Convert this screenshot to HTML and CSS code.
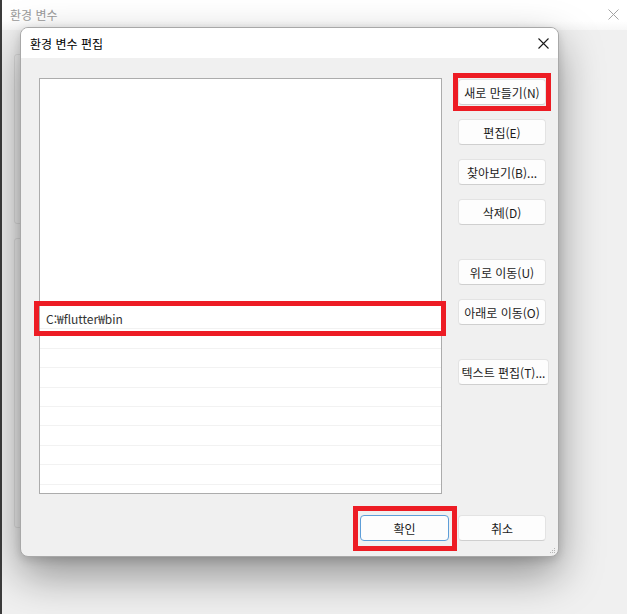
FILE: index.html
```html
<!DOCTYPE html>
<html lang="ko">
<head>
    <meta charset="UTF-8">
    <meta name="viewport" content="width=device-width, initial-scale=1.0">
    <title>환경 변수 편집</title>
    <link rel="stylesheet" href="styles.css">
</head>
<body>
    <div class="desktop">
        <!-- window behind the dialog -->
        <div class="bg-window">
            <div class="bg-titlebar">
                <span class="bg-title">환경 변수</span>
                <svg class="bg-close" width="11" height="11" viewBox="0 0 11 11">
                    <path d="M0.5 0.5 L10.5 10.5 M10.5 0.5 L0.5 10.5" stroke="#a3a3a3" stroke-width="1" fill="none"/>
                </svg>
            </div>
            <div class="bg-content">
                <div class="bg-group bg-group-top"></div>
                <div class="bg-group bg-group-bottom"></div>
            </div>
        </div>

        <div class="dialog">
            <div class="titlebar">
                <span class="dialog-title">환경 변수 편집</span>
                <svg class="close-icon" width="11" height="11" viewBox="0 0 11 11">
                    <path d="M0.5 0.5 L10.5 10.5 M10.5 0.5 L0.5 10.5" stroke="#1a1a1a" stroke-width="1.1" fill="none"/>
                </svg>
            </div>

            <div class="dialog-body">
                <div class="main-row">
                    <div class="list">
                        <div class="list-spacer"></div>
                        <div class="row row-selected marked">C:₩flutter₩bin</div>
                        <div class="row"></div>
                        <div class="row"></div>
                        <div class="row"></div>
                        <div class="row"></div>
                        <div class="row"></div>
                        <div class="row"></div>
                        <div class="row"></div>
                        <div class="row"></div>
                    </div>

                    <div class="side-buttons">
                        <button class="btn marked marked-new">새로 만들기(N)</button>
                        <button class="btn">편집(E)</button>
                        <button class="btn">찾아보기(B)...</button>
                        <button class="btn">삭제(D)</button>
                        <button class="btn group-start">위로 이동(U)</button>
                        <button class="btn">아래로 이동(O)</button>
                        <button class="btn btn-wide group-start">텍스트 편집(T)...</button>
                    </div>
                </div>

                <div class="footer">
                    <button class="btn btn-default marked marked-ok">확인</button>
                    <button class="btn">취소</button>
                </div>
            </div>

            <svg class="grip" width="7" height="7" viewBox="0 0 7 7">
                <rect x="5" y="1" width="1" height="1" fill="#b5b5b5"/>
                <rect x="3" y="3" width="1" height="1" fill="#b5b5b5"/>
                <rect x="5" y="3" width="1" height="1" fill="#b5b5b5"/>
                <rect x="1" y="5" width="1" height="1" fill="#b5b5b5"/>
                <rect x="3" y="5" width="1" height="1" fill="#b5b5b5"/>
                <rect x="5" y="5" width="1" height="1" fill="#b5b5b5"/>
            </svg>
        </div>
    </div>
</body>
</html>
```

FILE: styles.css
```css
* {
    box-sizing: border-box;
}

body {
    margin: 0;
    font-family: 'Noto Sans CJK KR', 'Noto Sans', sans-serif;
    font-size: 12px;
    color: #1b1b1b;
    background-color: #f0f0f0;
}

.desktop {
    position: relative;
    width: 627px;
    height: 614px;
    overflow: hidden;
}

/* background window */

.bg-window {
    height: 100%;
    background-color: #f0f0f0;
    border-left: 2px solid #3c3c3c;
}

.bg-titlebar {
    display: flex;
    align-items: center;
    justify-content: space-between;
    height: 30px;
    padding: 0 8px 2px 8px;
    background: linear-gradient(#ffffff 70%, #f7f7f7);
}

.bg-title {
    color: #9b9b9b;
}

.bg-content {
    display: flex;
    flex-direction: column;
    gap: 14px;
    padding: 24px 0 0 12px;
}

.bg-group {
    width: 500px;
    border: 1px solid #dedede;
    border-radius: 3px;
}

.bg-group-top {
    height: 170px;
}

.bg-group-bottom {
    height: 290px;
}

/* dialog */

.dialog {
    position: absolute;
    left: 20px;
    top: 27px;
    width: 539px;
    height: 530px;
    display: flex;
    flex-direction: column;
    background-color: #f0f0f0;
    border: 1px solid #a8a8a8;
    border-radius: 8px;
    box-shadow: 0 18px 44px rgba(0, 0, 0, 0.40), 0 3px 10px rgba(0, 0, 0, 0.14);
}

.titlebar {
    display: flex;
    align-items: center;
    justify-content: space-between;
    height: 30px;
    padding: 0 9px 0 9px;
    background-color: #ffffff;
    border-radius: 7px 7px 0 0;
    flex-shrink: 0;
}

.dialog-title {
    color: #000000;
}

.close-icon {
    display: block;
}

.dialog-body {
    padding: 20px 9px 0 18px;
}

.main-row {
    display: flex;
    gap: 16px;
}

.list {
    width: 403px;
    height: 416px;
    background-color: #ffffff;
    border: 1px solid #acacac;
}

.list-spacer {
    height: 231px;
}

.row {
    height: 19.4px;
    border-bottom: 1px solid #f2f2f2;
    padding-left: 6px;
    line-height: 18px;
}

.row-selected {
    color: #333333;
    position: relative;
}

.side-buttons {
    width: 91px;
    display: flex;
    flex-direction: column;
    align-items: flex-start;
    gap: 14px;
    padding-top: 1px;
}

.btn {
    position: relative;
    width: 88px;
    height: 26px;
    padding: 0;
    font-family: inherit;
    font-size: 12px;
    color: #1b1b1b;
    background-color: #fdfdfd;
    border: 1px solid #e3e3e3;
    border-bottom-color: #cfcfcf;
    border-radius: 4px;
    white-space: nowrap;
}

.btn-wide {
    width: 91px;
}

.group-start {
    margin-top: 20px;
}

.footer {
    display: flex;
    justify-content: flex-end;
    gap: 9px;
    margin-top: 21px;
    padding-right: 3px;
}

.btn-default {
    width: 89px;
    border: 1px solid #5e9ed8;
}

/* red annotation boxes */

.marked::after {
    content: "";
    position: absolute;
    border: 5px solid #ed1c24;
    pointer-events: none;
}

.row-selected::after {
    inset: -9px -5px -8px -6px;
}

.marked-new::after {
    inset: -7px -6px -7px -6px;
}

.marked-ok::after {
    inset: -10px -9px -11px -8px;
}

.grip {
    position: absolute;
    right: 2px;
    bottom: 2px;
}
```
